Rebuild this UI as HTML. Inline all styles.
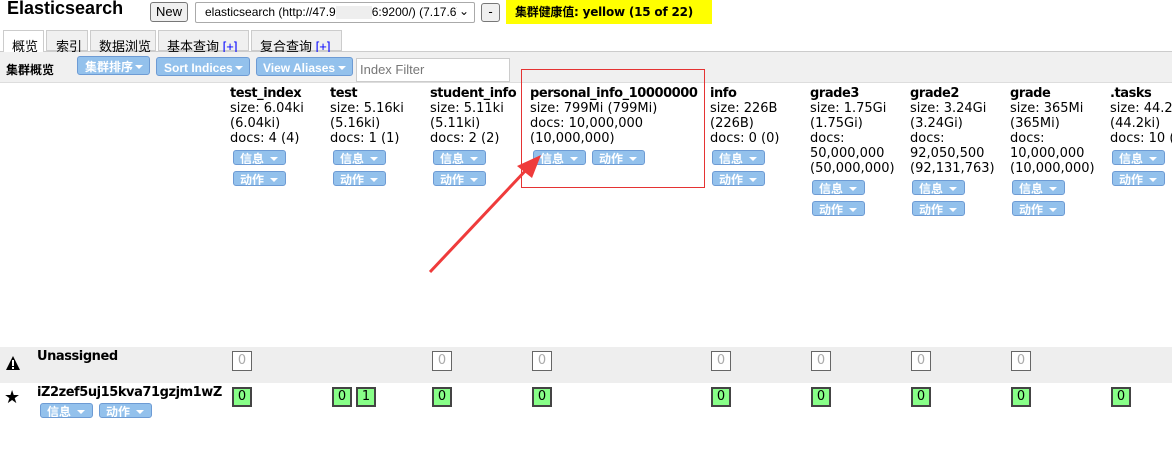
<!DOCTYPE html>
<html><head><meta charset="utf-8"><style>
*{box-sizing:border-box}
body{margin:0;width:1172px;height:467px;overflow:hidden;background:#fff;font-family:"DejaVu Sans","Liberation Sans","Noto Sans CJK SC",sans-serif;font-size:13px;color:#000;position:relative}
.a{position:absolute}
.sans{font-family:"Liberation Sans","Noto Sans CJK SC",sans-serif}
.btn{position:absolute;height:15px;background:#93c1ec;border:1px solid #6d9bd4;border-radius:3px;color:#fff;font-weight:bold;font-size:12px;line-height:17px;padding-left:6px;font-family:"Liberation Sans","Noto Sans CJK SC",sans-serif;overflow:hidden;white-space:nowrap}
.btn:after{content:"";position:absolute;right:7px;top:6px;border-left:4px solid transparent;border-right:4px solid transparent;border-top:4px solid #fff}
.tb:after{top:8px;right:6px}
.col{position:absolute;top:86px;width:100px;line-height:15px;white-space:nowrap}
.col b,.bn{display:block;letter-spacing:-0.45px}
.sh{position:absolute;width:20px;height:20px;font-size:13px;text-align:center;line-height:17px}
.u{border:1px solid #666;color:#aaa;background:#fff}
.g{border:2px solid #444;background:#88ff88;line-height:16px}
</style></head><body>
<div class="a" style="left:7px;top:-2px;font-size:18px;font-weight:bold;font-family:'Liberation Sans',sans-serif">Elasticsearch</div>
<div class="a sans" style="left:150px;top:2px;width:38px;height:20px;border:1px solid #777;border-radius:3px;background:#f0f0f0;font-size:13px;text-align:center;line-height:18px">New</div>
<div class="a sans" style="left:195px;top:2px;width:280px;height:21px;border:1px solid #aaa;border-radius:2px;font-size:12px;line-height:19px;padding-left:9px;white-space:nowrap;overflow:hidden">elasticsearch (http://47.9<span style="display:inline-block;width:36px;height:13px;background:#eee;vertical-align:middle"></span>6:9200/) (7.17.6)<span style="position:absolute;right:5px;top:-1px;background:#fff;padding-left:2px">&#8964;</span></div>
<div class="a sans" style="left:481px;top:3px;width:19px;height:19px;border:1px solid #777;border-radius:3px;background:#f0f0f0;text-align:center;line-height:16px">-</div>
<div class="a" style="left:506px;top:0;width:206px;height:24px;background:#ff0;font-weight:bold;font-size:12px;line-height:24px;padding-left:9px;white-space:nowrap;font-family:'DejaVu Sans','Noto Sans CJK SC',sans-serif;letter-spacing:-0.2px">集群健康值: yellow (15 of 22)</div>
<div class="a" style="left:0;top:51px;width:1172px;height:1px;background:#ccc"></div>
<div class="a sans" style="left:3px;top:30px;width:41px;height:22px;border:1px solid #ccc;border-bottom:none;background:#fff;font-size:13px;padding:5px 0 0 8px">概览</div>
<div class="a sans" style="left:46px;top:30px;width:42px;height:21px;border:1px solid #ccc;background:#f0f0f0;font-size:13px;padding:5px 0 0 9px">索引</div>
<div class="a sans" style="left:90px;top:30px;width:66px;height:21px;border:1px solid #ccc;background:#f0f0f0;font-size:13px;padding:5px 0 0 8px">数据浏览</div>
<div class="a sans" style="left:158px;top:30px;width:91px;height:21px;border:1px solid #ccc;background:#f0f0f0;font-size:13px;padding:5px 0 0 8px;white-space:nowrap">基本查询 <span style="color:#00f">[+]</span></div>
<div class="a sans" style="left:251px;top:30px;width:91px;height:21px;border:1px solid #ccc;background:#f0f0f0;font-size:13px;padding:5px 0 0 8px;white-space:nowrap">复合查询 <span style="color:#00f">[+]</span></div>
<div class="a" style="left:0;top:52px;width:1172px;height:31px;background:#f0f0f0;border-bottom:1px solid #ddd"></div>
<div class="a sans" style="left:6px;top:61px;font-weight:bold;font-size:12px">集群概览</div>
<div class="btn tb" style="left:77px;top:56px;width:73px;height:19px;line-height:21px;padding-left:7px;font-size:12px">集群排序</div>
<div class="btn tb" style="left:156px;top:57px;width:94px;height:19px;line-height:21px;padding-left:7px;font-size:12px">Sort Indices</div>
<div class="btn tb" style="left:256px;top:57px;width:97px;height:19px;line-height:21px;padding-left:6px;font-size:12px">View Aliases</div>
<div class="a sans" style="left:356px;top:58px;width:154px;height:24px;border:1px solid #ccc;background:#fff;color:#777;font-size:13px;line-height:22px;padding-left:3px">Index Filter</div>

<div class="col" style="left:230px"><b>test_index</b>size: 6.04ki<br>(6.04ki)<br>docs: 4 (4)</div>
<div class="col" style="left:330px"><b>test</b>size: 5.16ki<br>(5.16ki)<br>docs: 1 (1)</div>
<div class="col" style="left:430px"><b>student_info</b>size: 5.11ki<br>(5.11ki)<br>docs: 2 (2)</div>
<div class="col" style="left:530px;width:180px"><b>personal_info_10000000</b>size: 799Mi (799Mi)<br>docs: 10,000,000<br>(10,000,000)</div>
<div class="col" style="left:710px"><b>info</b>size: 226B<br>(226B)<br>docs: 0 (0)</div>
<div class="col" style="left:810px"><b>grade3</b>size: 1.75Gi<br>(1.75Gi)<br>docs:<br>50,000,000<br>(50,000,000)</div>
<div class="col" style="left:910px"><b>grade2</b>size: 3.24Gi<br>(3.24Gi)<br>docs:<br>92,050,500<br>(92,131,763)</div>
<div class="col" style="left:1010px"><b>grade</b>size: 365Mi<br>(365Mi)<br>docs:<br>10,000,000<br>(10,000,000)</div>
<div class="col" style="left:1110px"><b>.tasks</b>size: 44.2ki<br>(44.2ki)<br>docs: 10 (10)</div>

<div class="btn" style="left:233px;top:150px;width:53px">信息</div><div class="btn" style="left:233px;top:171px;width:53px">动作</div>
<div class="btn" style="left:333px;top:150px;width:53px">信息</div><div class="btn" style="left:333px;top:171px;width:53px">动作</div>
<div class="btn" style="left:433px;top:150px;width:53px">信息</div><div class="btn" style="left:433px;top:171px;width:53px">动作</div>
<div class="btn" style="left:533px;top:150px;width:53px">信息</div><div class="btn" style="left:592px;top:150px;width:53px">动作</div>
<div class="btn" style="left:712px;top:150px;width:53px">信息</div><div class="btn" style="left:712px;top:171px;width:53px">动作</div>
<div class="btn" style="left:812px;top:180px;width:53px">信息</div><div class="btn" style="left:812px;top:201px;width:53px">动作</div>
<div class="btn" style="left:912px;top:180px;width:53px">信息</div><div class="btn" style="left:912px;top:201px;width:53px">动作</div>
<div class="btn" style="left:1012px;top:180px;width:53px">信息</div><div class="btn" style="left:1012px;top:201px;width:53px">动作</div>
<div class="btn" style="left:1112px;top:150px;width:53px">信息</div><div class="btn" style="left:1112px;top:171px;width:53px">动作</div>

<div class="a" style="left:521px;top:69px;width:184px;height:119px;border:1px solid #e53333"></div>
<svg class="a" style="left:0;top:0" width="1172" height="467"><line x1="430" y1="272" x2="528" y2="168" stroke="#ef3b3b" stroke-width="3"/><polygon points="541,155 517,166 532,178" fill="#ef3b3b"/></svg>

<div class="a" style="left:0;top:347px;width:1172px;height:36px;background:#eee"></div>
<svg class="a" style="left:5px;top:355px" width="16" height="16"><polygon points="8,1 15,15 1,15" fill="#000"/><rect x="7" y="5" width="2" height="6" fill="#fff"/><rect x="7" y="12" width="2" height="2" fill="#fff"/></svg>
<div class="a bn" style="left:37px;top:349px;font-weight:bold">Unassigned</div>
<div class="a" style="left:4px;top:387px;font-size:18px">★</div>
<div class="a bn" style="left:37px;top:385px;font-weight:bold">iZ2zef5uj15kva71gzjm1wZ</div>
<div class="btn" style="left:40px;top:403px;width:53px">信息</div><div class="btn" style="left:99px;top:403px;width:53px">动作</div>

<div class="sh u" style="left:232px;top:351px">0</div>
<div class="sh u" style="left:432px;top:351px">0</div>
<div class="sh u" style="left:532px;top:351px">0</div>
<div class="sh u" style="left:711px;top:351px">0</div>
<div class="sh u" style="left:811px;top:351px">0</div>
<div class="sh u" style="left:911px;top:351px">0</div>
<div class="sh u" style="left:1011px;top:351px">0</div>

<div class="sh g" style="left:232px;top:387px">0</div>
<div class="sh g" style="left:332px;top:387px">0</div>
<div class="sh g" style="left:356px;top:387px">1</div>
<div class="sh g" style="left:432px;top:387px">0</div>
<div class="sh g" style="left:532px;top:387px">0</div>
<div class="sh g" style="left:711px;top:387px">0</div>
<div class="sh g" style="left:811px;top:387px">0</div>
<div class="sh g" style="left:911px;top:387px">0</div>
<div class="sh g" style="left:1011px;top:387px">0</div>
<div class="sh g" style="left:1111px;top:387px">0</div>
</body></html>
